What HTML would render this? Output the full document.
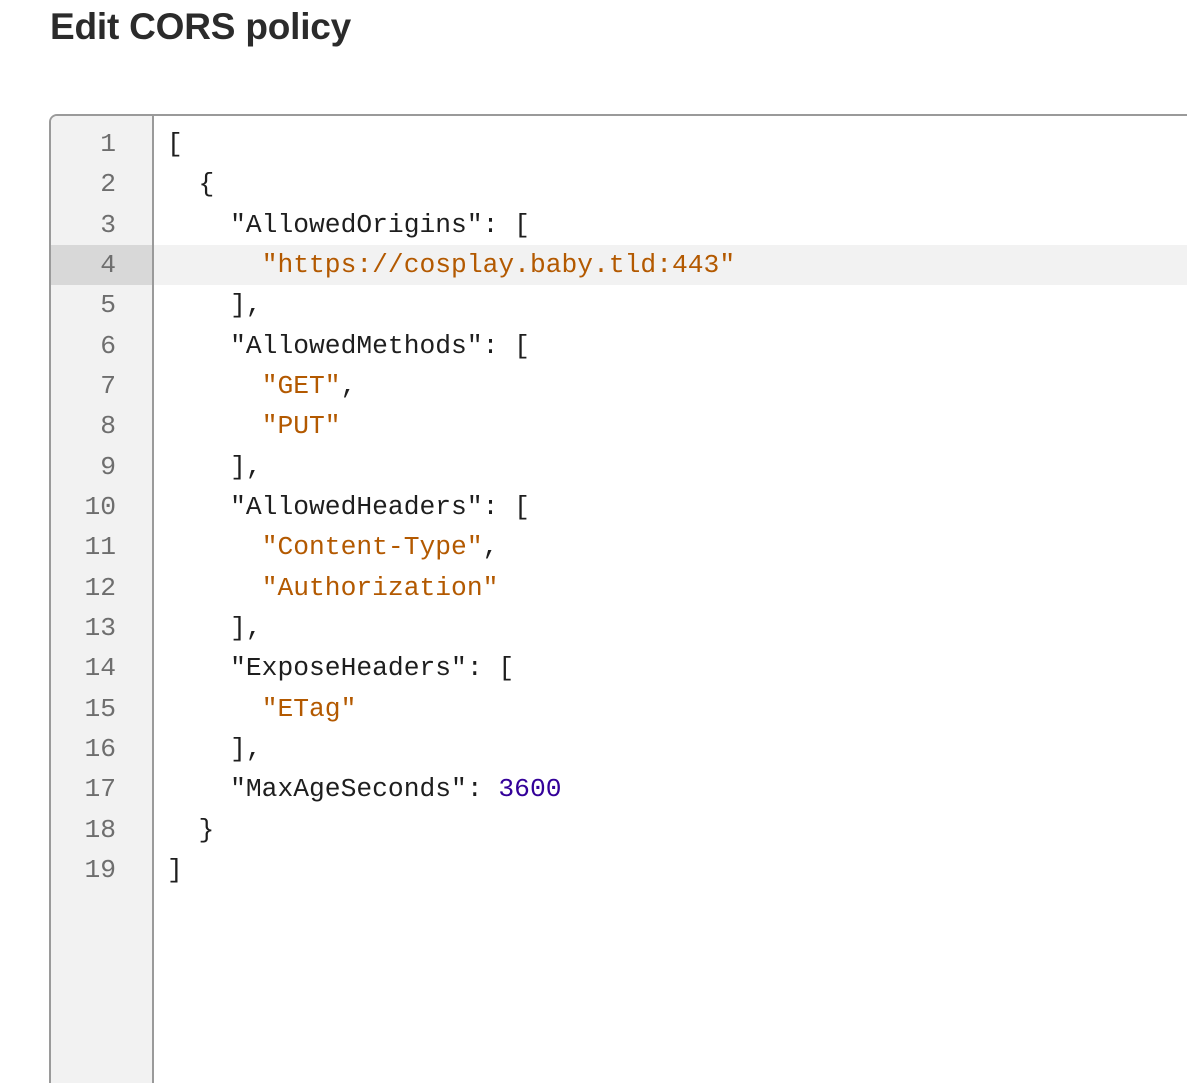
<!DOCTYPE html>
<html><head><style>
html,body{margin:0;padding:0;background:#fff;width:1187px;height:1083px;overflow:hidden}
h1{position:absolute;left:50px;top:2px;margin:0;font:bold 37px/50px "Liberation Sans",sans-serif;color:#2b2b2b;letter-spacing:-0.2px}
.box{position:absolute;left:49px;top:114px;width:1160px;height:967px;border:2px solid #9a9a9a;border-bottom:none;border-radius:8px 0 0 0;overflow:hidden}
.gut{position:absolute;left:0;top:0;width:101px;height:100%;background:#f2f2f2;border-right:2px solid #9a9a9a}
.hl{position:absolute;left:0;top:129px;width:100%;height:40px;background:#f2f2f2}
.hlg{position:absolute;left:0;top:129px;width:101px;height:40px;background:#d8d8d8}
.nums,.code{position:absolute;top:8px;font:26.3px/40.33px "Liberation Mono",monospace;white-space:pre}
.nums{left:0;width:65px;text-align:right;color:#6e6e6e}
.code{left:116px;color:#1e1e1e}
.s{color:#b35900}.n{color:#330099}
</style></head><body>
<h1>Edit CORS policy</h1>
<div class="box">
<div class="hl"></div>
<div class="gut"></div>
<div class="hlg"></div>
<div class="nums">1
2
3
4
5
6
7
8
9
10
11
12
13
14
15
16
17
18
19</div>
<div class="code">[
  {
    "AllowedOrigins": [
      <span class="s">"https://cosplay.baby.tld:443"</span>
    ],
    "AllowedMethods": [
      <span class="s">"GET"</span>,
      <span class="s">"PUT"</span>
    ],
    "AllowedHeaders": [
      <span class="s">"Content-Type"</span>,
      <span class="s">"Authorization"</span>
    ],
    "ExposeHeaders": [
      <span class="s">"ETag"</span>
    ],
    "MaxAgeSeconds": <span class="n">3600</span>
  }
]</div>
</div>
</body></html>
